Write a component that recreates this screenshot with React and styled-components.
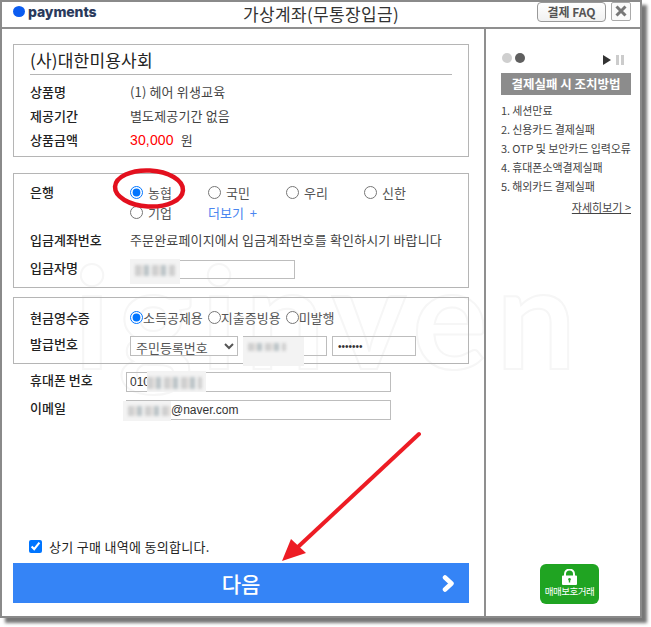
import React from 'react'
import styled, { createGlobalStyle } from 'styled-components'

const FONT = `"Noto Sans CJK KR", "Noto Sans", sans-serif`
const LATIN = `"Liberation Sans", "Noto Sans CJK KR", sans-serif`

const Global = createGlobalStyle`
    html, body {
        margin: 0;
        background: #fff;
        overflow: hidden;
    }
    * { box-sizing: border-box; }
`

const Page = styled.div`
    position: relative;
    width: 651px;
    height: 627px;
    overflow: hidden;
    font-family: ${FONT};
    color: #222;
`

const Popup = styled.div`
    position: relative;
    width: 642px;
    height: 618px;
    background: #fff;
    border: 2px solid #8a8a8a;
    box-shadow: 5px 5px 3px #777;
    display: flex;
    flex-direction: column;
`

const Header = styled.header`
    height: 27px;
    flex: none;
    border-bottom: 2px solid #8f8f8f;
    display: grid;
    grid-template-columns: 1fr auto 1fr;
    align-items: center;
`

const Logo = styled.div`
    display: flex;
    align-items: center;
    gap: 3px;
    padding-left: 11px;
    margin-top: -6px;
    font-family: Inter, "Noto Sans", sans-serif;
    font-weight: 800;
    font-size: 14px;
    letter-spacing: -0.1px;
    color: #2a3a5c;
`

const LogoDot = styled.span`
    width: 12px;
    height: 11px;
    border-radius: 50%;
    background: #0b5cf0;
`

const Title = styled.h1`
    margin: -3px 0 0;
    font-size: 17px;
    font-weight: 400;
    color: #333;
    letter-spacing: 0.35px;
`

const HeaderActions = styled.div`
    display: flex;
    justify-content: flex-end;
    gap: 5px;
    padding-right: 9px;
    margin-top: -6px;
`

const FaqButton = styled.button`
    width: 69px;
    height: 20px;
    padding: 0;
    border: 1px solid #999;
    border-radius: 4px;
    background: linear-gradient(#fff, #f1f1f1);
    font-family: ${FONT};
    font-size: 12px;
    font-weight: 700;
    color: #555;
`

const CloseButton = styled.button`
    width: 20px;
    height: 19px;
    padding: 0;
    border: 1px solid #aaa;
    border-radius: 2px;
    background: #fafafa;
    display: flex;
    align-items: center;
    justify-content: center;
`

const Body = styled.div`
    position: relative;
    flex: 1;
    min-height: 0;
    display: flex;
`

const Main = styled.main`
    width: 484px;
    flex: none;
    padding: 15px 15px 13px 11px;
    border-right: 2px solid #8f8f8f;
    display: flex;
    flex-direction: column;
`

const Box = styled.section`
    border: 1px solid #b5b5b5;
    padding: ${p => p.$pad};
    margin-bottom: ${p => p.$gap}px;
`

const ShopName = styled.h2`
    margin: 0 16px 4px 0;
    height: 30px;
    line-height: 29px;
    font-size: 17px;
    font-weight: 400;
    letter-spacing: 0.2px;
    border-bottom: 1px solid #b5b5b5;
    color: #222;
`

const Row = styled.div`
    display: flex;
    align-items: ${p => p.$align || 'center'};
    height: ${p => p.$h}px;
    font-size: 13px;
`

const Label = styled.div`
    width: ${p => p.$w || 100}px;
    flex: none;
    font-size: 13px;
    font-weight: 500;
    color: #222;
`

const ContactLabel = styled(Label)`
    margin-top: -5px;
`

const Value = styled.div`
    font-size: 13px;
    letter-spacing: 0.15px;
    color: #444;
`

const Price = styled.span`
    font-family: ${LATIN};
    font-size: 14px;
    color: #f00;
    margin-right: 7px;
`

const BankGrid = styled.div`
    display: grid;
    grid-template-columns: repeat(4, 78px);
    grid-auto-rows: 20px;
    align-items: center;
`

const Choice = styled.label`
    display: flex;
    align-items: center;
    gap: ${p => p.$gap}px;
    font-size: 13px;
    color: #555;
`

const Radio = styled.input.attrs({ type: 'radio' })`
    width: 13px;
    height: 13px;
    margin: 0;
    accent-color: #0075ff;
`

const MoreLink = styled.a`
    font-size: 13px;
    word-spacing: 3px;
    color: #4a86f0;
`

const TextField = styled.input`
    display: block;
    width: ${p => p.$w}px;
    height: ${p => p.$h || 20}px;
    border: 1px solid #bdbdbd;
    background: transparent;
    padding: 0 0 0 ${p => p.$pad || 3}px;
    font-family: ${LATIN};
    font-size: ${p => p.$size || 12}px;
    color: #333;
    border-radius: 0;
    outline: none;
`

const Masked = styled.div`
    position: relative;
    flex: none;
`

const NameField = styled(Masked)`
    align-self: flex-end;
    margin-bottom: 2px;
`

const Smudge = styled.div`
    position: absolute;
    left: ${p => p.$x}px;
    top: ${p => p.$y}px;
    width: ${p => p.$w}px;
    height: ${p => p.$h}px;
    background: #f3f3f3;
    overflow: hidden;
    &::after {
        content: '';
        position: absolute;
        inset: ${p => p.$inset};
        filter: blur(1.5px);
        background: repeating-linear-gradient(90deg, #cfcfcf 0 6px, #e6e3e0 6px 9px, #bcc4c8 9px 14px, #f0f0f0 14px 17px);
    }
`

const CashChoices = styled.div`
    display: flex;
    gap: 5px;
`

const IdRow = styled.div`
    align-self: flex-end;
    display: flex;
    gap: 5px;
`

const IdSelect = styled.select`
    width: 108px;
    height: 20px;
    border: 1px solid #bdbdbd;
    border-radius: 0;
    background: #fff;
    padding: 0 0 0 1px;
    font-family: ${FONT};
    font-size: 13px;
    color: #555;
`

const ContactRow = styled.div`
    display: flex;
    align-items: center;
    height: 28px;
    padding-left: 17px;
`

const Agree = styled.label`
    margin-top: auto;
    margin-left: 16px;
    margin-bottom: 7px;
    display: flex;
    align-items: center;
    gap: 7px;
    font-size: 13px;
    letter-spacing: 0.3px;
    color: #222;
`

const AgreeBox = styled.input.attrs({ type: 'checkbox' })`
    width: 13px;
    height: 13px;
    margin: 0;
    accent-color: #0075ff;
`

const NextButton = styled.button`
    position: relative;
    flex: none;
    height: 40px;
    border: 0;
    background: #3584f6;
    color: #fff;
    font-family: ${FONT};
    font-size: 21px;
    font-weight: 500;
    display: flex;
    align-items: center;
    justify-content: center;
    & svg {
        position: absolute;
        right: 14px;
        top: 12px;
    }
`

const Side = styled.aside`
    flex: 1;
    padding: 22px 9px 12px 15px;
    display: flex;
    flex-direction: column;
`

const Pager = styled.div`
    display: flex;
    align-items: center;
    height: 14px;
    margin-bottom: 8px;
    padding-left: 1px;
    gap: 3px;
`

const Dot = styled.span`
    width: 10px;
    height: 10px;
    border-radius: 50%;
    background: ${p => p.$color};
`

const PagerControls = styled.div`
    margin-left: auto;
    margin-right: 7px;
`

const SideTitle = styled.div`
    height: 22px;
    line-height: 21px;
    background: #8c8c8c;
    color: #fff;
    font-size: 12.5px;
    font-weight: 700;
    text-align: center;
    margin-bottom: 6px;
`

const FailList = styled.ol`
    list-style: none;
    margin: 0;
    padding: 0;
    font-size: 11px;
    color: #444;
`

const FailItem = styled.li`
    height: 19px;
    line-height: 19px;
    white-space: nowrap;
    letter-spacing: -0.1px;
`

const Detail = styled.a`
    align-self: flex-end;
    margin-top: 3px;
    font-size: 11px;
    color: #444;
    text-decoration: underline;
`

const SafeBadge = styled.div`
    margin-top: auto;
    align-self: center;
    margin-left: 7px;
    width: 59px;
    height: 40px;
    border-radius: 6px;
    background: #20a422;
    color: #fff;
    font-size: 9.5px;
    letter-spacing: -0.5px;
    display: flex;
    flex-direction: column;
    align-items: center;
    padding-top: 5px;
    line-height: 13px;
    white-space: nowrap;
`

const Watermark = styled.div`
    position: absolute;
    left: 72px;
    top: 252px;
    font-family: Lato, sans-serif;
    font-weight: 700;
    font-size: 142px;
    line-height: 120px;
    letter-spacing: 8px;
    color: transparent;
    -webkit-text-stroke: 2px #f6f6f6;
    pointer-events: none;
    white-space: nowrap;
`

const Annotations = styled.svg`
    position: absolute;
    left: 0;
    top: 0;
    pointer-events: none;
`

const banks = ['농협', '국민', '우리', '신한']
const cashTypes = [
    { label: '소득공제용', checked: true },
    { label: '지출증빙용' },
    { label: '미발행' },
]
const failures = ['1. 세션만료', '2. 신용카드 결제실패', '3. OTP 및 보안카드 입력오류', '4. 휴대폰소액결제실패', '5. 해외카드 결제실패']

const App = () => {
    return (
        <Page>
            <Global />
            <Popup>
                <Watermark aria-hidden="true">iginven</Watermark>
                <Header>
                    <Logo><LogoDot />payments</Logo>
                    <Title>가상계좌(무통장입금)</Title>
                    <HeaderActions>
                        <FaqButton>결제 FAQ</FaqButton>
                        <CloseButton>
                            <svg width="12" height="12" viewBox="0 0 12 12">
                                <path d="M1.5 1.5L10.5 10.5M10.5 1.5L1.5 10.5" stroke="#777" strokeWidth="3" />
                            </svg>
                        </CloseButton>
                    </HeaderActions>
                </Header>
                <Body>
                    <Main>
                        <Box $pad="0 0 5px 16px" $gap={16}>
                            <ShopName>(사)대한미용사회</ShopName>
                            <Row $h={24}><Label>상품명</Label><Value>(1) 헤어 위생교육</Value></Row>
                            <Row $h={24}><Label>제공기간</Label><Value>별도제공기간 없음</Value></Row>
                            <Row $h={24}><Label>상품금액</Label><Value><Price>30,000</Price>원</Value></Row>
                        </Box>
                        <Box $pad="8px 0 6px 16px" $gap={9}>
                            <Row $h={43} $align="flex-start">
                                <Label>은행</Label>
                                <BankGrid>
                                    {banks.map((bank, i) => (
                                        <Choice key={bank} $gap={5}>
                                            <Radio name="bank" defaultChecked={i === 0} />{bank}
                                        </Choice>
                                    ))}
                                    <Choice $gap={5}><Radio name="bank" />기업</Choice>
                                    <MoreLink>더보기 +</MoreLink>
                                </BankGrid>
                            </Row>
                            <Row $h={28}>
                                <Label>입금계좌번호</Label>
                                <Value>주문완료페이지에서 입금계좌번호를 확인하시기 바랍니다</Value>
                            </Row>
                            <Row $h={28}>
                                <Label>입금자명</Label>
                                <NameField>
                                    <TextField $w={165} $h={19} />
                                    <Smudge $x={0} $y={-1} $w={50} $h={25} $inset="6px 5px 8px 5px" />
                                </NameField>
                            </Row>
                        </Box>
                        <Box $pad="6px 0 7px 16px" $gap={4}>
                            <Row $h={26}>
                                <Label>현금영수증</Label>
                                <CashChoices>
                                    {cashTypes.map(type => (
                                        <Choice key={type.label} $gap={0}>
                                            <Radio name="cash" defaultChecked={type.checked} />{type.label}
                                        </Choice>
                                    ))}
                                </CashChoices>
                            </Row>
                            <Row $h={26}>
                                <Label>발급번호</Label>
                                <IdRow>
                                    <IdSelect defaultValue="주민등록번호">
                                        <option>주민등록번호</option>
                                    </IdSelect>
                                    <Masked>
                                        <TextField $w={84} />
                                        <Smudge $x={0} $y={1} $w={61} $h={29} $inset="6px 18px 15px 5px" />
                                    </Masked>
                                    <TextField $w={84} $pad={5} $size={10} type="password" defaultValue="1234567" />
                                </IdRow>
                            </Row>
                        </Box>
                        <ContactRow>
                            <ContactLabel $w={96}>휴대폰 번호</ContactLabel>
                            <Masked>
                                <TextField $w={265} defaultValue="010" />
                                <Smudge $x={21} $y={-1} $w={59} $h={21} $inset="6px 4px 3px 0" />
                            </Masked>
                        </ContactRow>
                        <ContactRow>
                            <ContactLabel $w={96}>이메일</ContactLabel>
                            <Masked>
                                <TextField $w={265} $pad={44} defaultValue="@naver.com" />
                                <Smudge $x={-3} $y={1} $w={48} $h={20} $inset="5px 0 5px 5px" />
                            </Masked>
                        </ContactRow>
                        <Agree><AgreeBox defaultChecked />상기 구매 내역에 동의합니다.</Agree>
                        <NextButton>
                            다음
                            <svg width="13" height="17" viewBox="0 0 13 17">
                                <path d="M3 2.5L9.5 8.5L3 14.5" fill="none" stroke="#fff" strokeWidth="4.5" strokeLinecap="round" strokeLinejoin="round" />
                            </svg>
                        </NextButton>
                    </Main>
                    <Side>
                        <Pager>
                            <Dot $color="#cfcfcf" />
                            <Dot $color="#5f5f5f" />
                            <PagerControls>
                                <svg width="21" height="10" viewBox="0 0 21 10">
                                    <path d="M0 0L8 5L0 10Z" fill="#333" />
                                    <path d="M13 0h3v10h-3zM18 0h3v10h-3z" fill="#ccc" />
                                </svg>
                            </PagerControls>
                        </Pager>
                        <SideTitle>결제실패 시 조치방법</SideTitle>
                        <FailList>
                            {failures.map(item => <FailItem key={item}>{item}</FailItem>)}
                        </FailList>
                        <Detail>자세히보기 &gt;</Detail>
                        <SafeBadge>
                            <svg width="17" height="16" viewBox="0 0 17 16">
                                <path d="M4 7V5a4.5 4.5 0 0 1 9 0v2" fill="none" stroke="#fff" strokeWidth="2" />
                                <path fillRule="evenodd" fill="#fff" d="M2 6.5h13a1 1 0 0 1 1 1V15a1 1 0 0 1-1 1H2a1 1 0 0 1-1-1V7.5a1 1 0 0 1 1-1zM8.5 9a1.4 1.4 0 0 0-.7 2.6V13.500h1.400V11.600A1.400 1.400 0 0 0 8.500 9z" />
                            </svg>
                            매매보호거래
                        </SafeBadge>
                    </Side>
                </Body>
            </Popup>
            <Annotations width="651" height="627" viewBox="0 0 651 627">
                <ellipse cx="149" cy="188.500" rx="34" ry="18" fill="none" stroke="#e3101e" strokeWidth="4.500" transform="rotate(3 149 188.500)" />
                <path d="M419 434L299 546" stroke="#ed1c24" strokeWidth="4" strokeLinecap="round" />
                <path d="M282 561L291 539L306 553Z" fill="#ed1c24" />
            </Annotations>
        </Page>
    )
}

export default App
